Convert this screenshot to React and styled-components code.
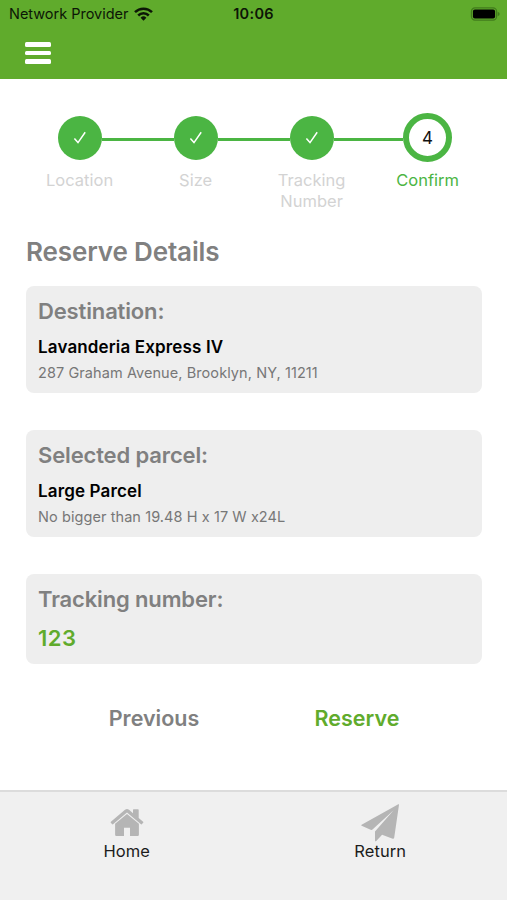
import React from "react";
import styled, { createGlobalStyle } from "styled-components";

const GlobalStyle = createGlobalStyle`
  * {
    box-sizing: border-box;
  }
  body {
    margin: 0;
    background-color: #fff;
    font-family: Inter, "Liberation Sans", sans-serif;
  }
`;

const Screen = styled.div`
  display: flex;
  flex-direction: column;
  width: 507px;
  height: 900px;
  overflow: hidden;
  background-color: #fff;
`;

const Header = styled.header`
  height: 79px;
  background-color: #60ab2c;
`;

const StatusBar = styled.div`
  display: grid;
  grid-template-columns: 1fr auto 1fr;
  align-items: center;
  height: 28px;
  padding: 0 7px 0 9px;
  color: #0c1606;
  svg {
    display: block;
  }
`;

const Carrier = styled.div`
  display: flex;
  align-items: center;
  gap: 6px;
  font-size: 14.5px;
  line-height: 28px;
  letter-spacing: -0.02px;
  white-space: nowrap;
`;

const Clock = styled.div`
  margin-left: -2px;
  font-size: 14.5px;
  font-weight: 600;
  line-height: 28px;
  letter-spacing: 0.3px;
`;

const Battery = styled.div`
  justify-self: end;
`;

const MenuButton = styled.button`
  display: flex;
  flex-direction: column;
  gap: 4px;
  width: 26px;
  margin: 14px 0 0 25px;
  padding: 0;
  border: 0;
  background: none;
`;

const MenuBar = styled.span`
  height: 4.5px;
  border-radius: 1.5px;
  background-color: #fff;
`;

const Steps = styled.ol`
  display: flex;
  margin: 34px 21px 0 21.6px;
  padding: 0;
  list-style: none;
`;

const Step = styled.li`
  flex: 0 0 116px;
`;

const Track = styled.div`
  display: flex;
  align-items: center;
  height: 49px;
`;

const Line = styled.div`
  flex: 1;
  height: 3.5px;
  margin-top: 4px;
  background-color: ${(props) => (props.$hidden ? "transparent" : "#4bb543")};
`;

const Circle = styled.div`
  display: flex;
  align-items: center;
  justify-content: center;
  width: ${(props) => (props.$active ? 49 : 44)}px;
  height: ${(props) => (props.$active ? 49 : 44)}px;
  border: ${(props) => (props.$active ? 6 : 0)}px solid #4bb543;
  border-radius: 50%;
  background-color: ${(props) => (props.$active ? "#fff" : "#4bb543")};
  color: #111;
  font-size: 17px;
`;

const StepLabel = styled.div`
  padding: 8px 20px 0;
  color: ${(props) => (props.$active ? "#4bb543" : "#d3d3d3")};
  font-size: 16.5px;
  line-height: 21px;
  text-align: center;
`;

const Title = styled.h1`
  margin: 24px 0 0 26px;
  color: #808080;
  font-size: 26px;
  font-weight: 600;
  line-height: 32px;
  letter-spacing: -0.13px;
`;

const Cards = styled.main`
  display: flex;
  flex-direction: column;
  gap: 37px;
  padding: 18px 25px 0 26px;
`;

const Card = styled.section`
  height: ${(props) => props.$height}px;
  padding: 11px 12px;
  border-radius: 8px;
  background-color: #eee;
  white-space: nowrap;
`;

const CardHeading = styled.h2`
  margin: 0;
  color: #808080;
  font-size: 22px;
  font-weight: 600;
  line-height: 28px;
  letter-spacing: -0.14px;
`;

const CardName = styled.div`
  margin-top: 10px;
  color: #000;
  font-size: 17px;
  font-weight: 600;
  line-height: 24px;
  letter-spacing: 0.15px;
`;

const CardText = styled.div`
  margin-top: 4px;
  color: #777;
  font-size: 14.5px;
  line-height: 20px;
  letter-spacing: 0.08px;
`;

const TrackingCode = styled.div`
  margin-top: 10px;
  color: #60ab2c;
  font-size: 22px;
  font-weight: 600;
  line-height: 30px;
  letter-spacing: 0.5px;
`;

const Actions = styled.div`
  display: grid;
  grid-template-columns: 203px 203px;
  justify-content: center;
  margin-top: 39px;
  padding-left: 4px;
`;

const Action = styled.button`
  padding: 0;
  border: 0;
  background: none;
  color: ${(props) => (props.$primary ? "#60ab2c" : "#808080")};
  font-family: inherit;
  font-size: 21.5px;
  font-weight: 600;
  line-height: 30px;
`;

const TabBar = styled.nav`
  display: grid;
  grid-template-columns: 1fr 1fr;
  height: 110px;
  margin-top: auto;
  border-top: 2px solid #dcdcdc;
  background-color: #f0f0f0;
`;

const Tab = styled.div`
  display: flex;
  flex-direction: column;
  align-items: center;
  padding-top: 12px;
  color: #1c1c1c;
  font-size: 16.5px;
  line-height: 20px;
  letter-spacing: 0.1px;
  svg {
    display: block;
    margin-bottom: -1px;
  }
`;

const WifiIcon = () => (
  <svg width="19" height="14" viewBox="0 0 19 14" fill="none" stroke="#0c1606" strokeWidth="2.5">
    <path d="M1 5.1a12.2 12.2 0 0 1 17 0" />
    <path d="M4.2 8.5a7.6 7.6 0 0 1 10.6 0" />
    <path d="M9.5 13.7l-2.9-3a4.2 4.2 0 0 1 5.8 0z" fill="#0c1606" stroke="none" />
  </svg>
);

const BatteryIcon = () => (
  <svg width="30" height="14" viewBox="0 0 30 14">
    <rect x="1.4" y="0.9" width="25.2" height="12.2" rx="3.6" fill="none" stroke="#417c1c" strokeWidth="1.2" />
    <rect x="2.9" y="2.4" width="22.2" height="9.2" rx="2" fill="#000" />
    <path d="M27.7 4.8q2 .8 2 2.2t-2 2.2z" fill="#417c1c" />
  </svg>
);

const CheckIcon = () => (
  <svg width="14" height="14" viewBox="0 0 14 14" fill="none" stroke="#fff" strokeWidth="1.5">
    <path d="M1.4 7.6L5 11.6L12.2 1.3" />
  </svg>
);

const HomeIcon = () => (
  <svg width="34" height="38" viewBox="0 0 34 38" fill="#b5b5b5">
    <path d="M17 9.9L28.9 19.8V30.7q0 1.2-1.2 1.2H20v-8.2h-6v8.2H6.3q-1.2 0-1.2-1.2V19.8z" />
    <path d="M.9 17.8L15 5.8q2-1.5 4 0l4 3.4V5.9q0-.6.6-.6h4.5q.6 0 .6.6v8.1l4.4 3.8q.5.4.1.9l-1.2 1.4q-.5.5-1 .1L17 8.5L3 20.2q-.5.4-1-.1L.8 18.7q-.4-.5.1-.9z" />
  </svg>
);

const PlaneIcon = () => (
  <svg width="38" height="38" viewBox="0 0 38 38" fill="#b5b5b5">
    <path d="M37.3.2L.6 20.8q-.6.5 0 .9l9.6 4.2q.7.2 1.3-.3L32.6 6.2L14 27.4v9q.2 1.4 1.3.5l5.8-6.2l10.6 4.1q1.2.3 1.5-1L38 .8q.1-.9-.7-.6z" />
  </svg>
);

const steps = ["Location", "Size", "Tracking Number", "Confirm"];

const StepIndicator = ({ current }) => (
  <Steps>
    {steps.map((label, i) => {
      const active = i === current;
      return (
        <Step key={label}>
          <Track>
            <Line $hidden={i === 0} />
            <Circle $active={active}>{active ? i + 1 : <CheckIcon />}</Circle>
            <Line $hidden={i === steps.length - 1} />
          </Track>
          <StepLabel $active={active}>{label}</StepLabel>
        </Step>
      );
    })}
  </Steps>
);

const App = () => (
  <>
    <GlobalStyle />
    <Screen>
      <Header>
        <StatusBar>
          <Carrier>
            Network Provider
            <WifiIcon />
          </Carrier>
          <Clock>10:06</Clock>
          <Battery>
            <BatteryIcon />
          </Battery>
        </StatusBar>
        <MenuButton aria-label="Menu">
          <MenuBar />
          <MenuBar />
          <MenuBar />
        </MenuButton>
      </Header>
      <StepIndicator current={3} />
      <Title>Reserve Details</Title>
      <Cards>
        <Card $height={107}>
          <CardHeading>Destination:</CardHeading>
          <CardName>Lavanderia Express IV</CardName>
          <CardText>287 Graham Avenue, Brooklyn, NY, 11211</CardText>
        </Card>
        <Card $height={107}>
          <CardHeading>Selected parcel:</CardHeading>
          <CardName>Large Parcel</CardName>
          <CardText>No bigger than 19.48 H x 17 W x24L</CardText>
        </Card>
        <Card $height={90}>
          <CardHeading>Tracking number:</CardHeading>
          <TrackingCode>123</TrackingCode>
        </Card>
      </Cards>
      <Actions>
        <Action>Previous</Action>
        <Action $primary>Reserve</Action>
      </Actions>
      <TabBar>
        <Tab>
          <HomeIcon />
          Home
        </Tab>
        <Tab>
          <PlaneIcon />
          Return
        </Tab>
      </TabBar>
    </Screen>
  </>
);

export default App;
